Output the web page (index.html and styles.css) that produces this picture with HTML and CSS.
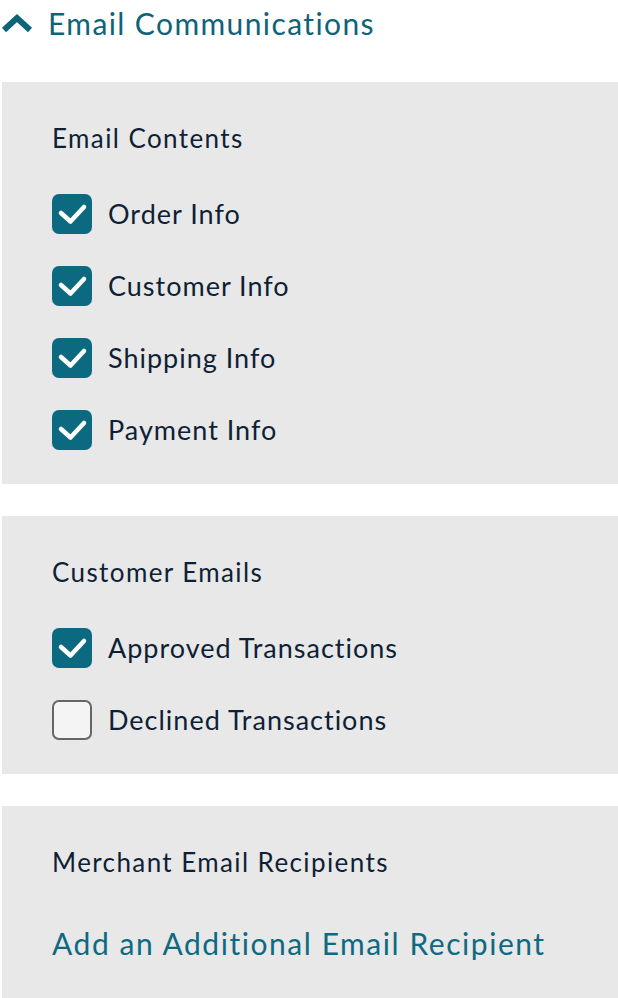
FILE: index.html
```html
<!DOCTYPE html>
<html lang="en">
<head>
    <meta charset="UTF-8">
    <meta name="viewport" content="width=device-width, initial-scale=1.0">
    <title>Email Communications</title>
    <link rel="stylesheet" href="styles.css">
</head>
<body>
    <div class="section-header">
        <svg class="chevron" viewBox="0 0 34 24">
            <polyline points="4,19 17,7 30,19"></polyline>
        </svg>
        <h1>Email Communications</h1>
    </div>

    <div class="panel">
        <h2>Email Contents</h2>
        <div class="options">
            <label class="option">
                <span class="box checked">
                    <svg viewBox="0 0 40 40"><polyline points="9,19 18.5,27.5 32,13"></polyline></svg>
                </span>
                <span class="label">Order Info</span>
            </label>
            <label class="option">
                <span class="box checked">
                    <svg viewBox="0 0 40 40"><polyline points="9,19 18.5,27.5 32,13"></polyline></svg>
                </span>
                <span class="label">Customer Info</span>
            </label>
            <label class="option">
                <span class="box checked">
                    <svg viewBox="0 0 40 40"><polyline points="9,19 18.5,27.5 32,13"></polyline></svg>
                </span>
                <span class="label">Shipping Info</span>
            </label>
            <label class="option">
                <span class="box checked">
                    <svg viewBox="0 0 40 40"><polyline points="9,19 18.5,27.5 32,13"></polyline></svg>
                </span>
                <span class="label">Payment Info</span>
            </label>
        </div>
    </div>

    <div class="panel">
        <h2>Customer Emails</h2>
        <div class="options">
            <label class="option">
                <span class="box checked">
                    <svg viewBox="0 0 40 40"><polyline points="9,19 18.5,27.5 32,13"></polyline></svg>
                </span>
                <span class="label">Approved Transactions</span>
            </label>
            <label class="option">
                <span class="box"></span>
                <span class="label">Declined Transactions</span>
            </label>
        </div>
    </div>

    <div class="panel last">
        <h2>Merchant Email Recipients</h2>
        <a href="#" class="add-link">Add an Additional Email Recipient</a>
    </div>
</body>
</html>
```

FILE: styles.css
```css
body {
    margin: 0;
    background-color: #fff;
    font-family: Lato, "Open Sans", sans-serif;
    color: #0f1f35;
    overflow: hidden;
}

.section-header {
    display: flex;
    align-items: center;
    height: 46px;
    margin-bottom: 36px;
}

.section-header .chevron {
    width: 34px;
    height: 24px;
    margin-right: 14px;
    fill: none;
    stroke: #0d6378;
    stroke-width: 6;
}

.section-header h1 {
    margin: 0;
    font-size: 30px;
    font-weight: 400;
    letter-spacing: 1.4px;
    color: #0d6378;
    line-height: 46px;
}

.panel {
    margin-left: 2px;
    margin-bottom: 32px;
    padding: 40px 0 34px 50px;
    background-color: #e8e8e8;
}

.panel h2 {
    margin: 0 0 40px 0;
    font-size: 26px;
    font-weight: 400;
    letter-spacing: 1.4px;
    line-height: 32px;
}

.options {
    display: flex;
    flex-direction: column;
    gap: 32px;
}

.option {
    display: flex;
    align-items: center;
    gap: 16px;
    cursor: pointer;
}

.box {
    width: 40px;
    height: 40px;
    box-sizing: border-box;
    border: 2px solid #666;
    border-radius: 7px;
    background-color: #f4f4f4;
}

.box.checked {
    border: none;
    background-color: #0b6a80;
}

.box svg {
    display: block;
    width: 40px;
    height: 40px;
    fill: none;
    stroke: #fff;
    stroke-width: 4.5;
    stroke-linecap: round;
    stroke-linejoin: round;
}

.label {
    font-size: 27px;
    letter-spacing: 1px;
    line-height: 40px;
}

.panel.last {
    margin-bottom: 0;
    padding-bottom: 60px;
}

.add-link {
    display: block;
    margin-top: 45px;
    font-size: 30px;
    letter-spacing: 1.55px;
    line-height: 40px;
    color: #0d6a80;
    text-decoration: none;
}
```
